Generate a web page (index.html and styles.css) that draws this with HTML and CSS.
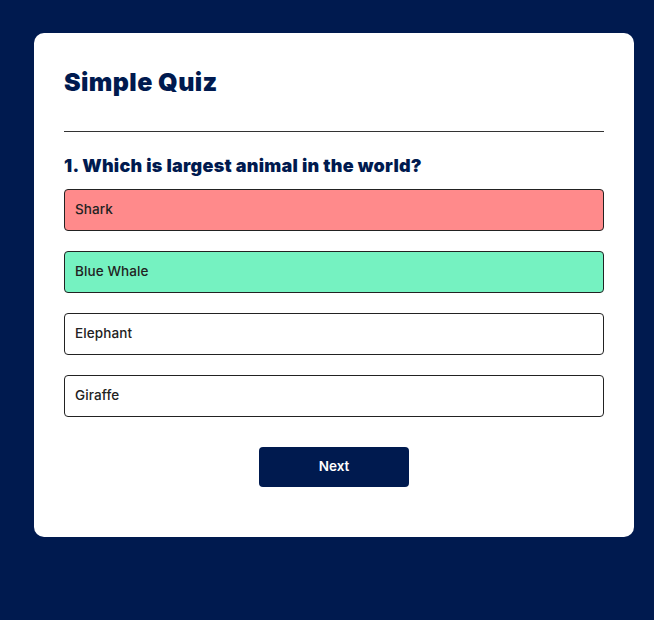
FILE: index.html
```html
<!DOCTYPE html>
<html lang="en">
<head>
<meta charset="utf-8">
<title>Simple Quiz</title>
<link rel="stylesheet" href="styles.css">
</head>
<body>
<div class="app">
  <h1 class="title">Simple Quiz</h1>
  <div class="quiz">
    <h2 class="question">1. Which is largest animal in the world?</h2>
    <div class="answers">
      <button class="btn incorrect">Shark</button>
      <button class="btn correct">Blue Whale</button>
      <button class="btn">Elephant</button>
      <button class="btn">Giraffe</button>
    </div>
    <button class="next">Next</button>
  </div>
</div>
</body>
</html>
```
FILE: styles.css
```css
* { box-sizing: border-box; }
html, body { margin: 0; padding: 0; }
body {
  background: #001a4f;
  font-family: Inter, "Noto Sans", sans-serif;
  width: 654px;
  height: 620px;
  overflow: hidden;
}
.app {
  background: #fff;
  width: 600px;
  margin: 33px 0 0 34px;
  border-radius: 10px;
  padding: 30px 30px 50px;
}
.title {
  margin: 0;
  font-size: 25px;
  line-height: 37px;
  font-weight: 900;
  color: #001a4f;
  padding-top: 1px;
  padding-bottom: 30px;
  border-bottom: 1px solid #333;
  letter-spacing: 0.4px;
}
.question {
  margin: 20px 0 10px;
  font-size: 18px;
  line-height: 27px;
  font-weight: 900;
  color: #001a4f;
  letter-spacing: 0.25px;
}
.answers {
  display: flex;
  flex-direction: column;
  gap: 20px;
}
.btn {
  display: block;
  width: 100%;
  height: 42px;
  background: #fff;
  color: #222;
  font-family: inherit;
  font-size: 13.5px;
  font-weight: 500;
  border: 1px solid #222;
  border-radius: 4px;
  padding: 0 10px 3px;
  text-align: left;
  letter-spacing: 0.1px;
}
.btn.incorrect { background: #ff8a8b; }
.btn.correct { background: #75f2c1; }
.next {
  display: block;
  width: 150px;
  height: 40px;
  margin: 30px auto 0;
  background: #001a4f;
  color: #fff;
  border: 0;
  border-radius: 4px;
  font-family: inherit;
  font-size: 13.5px;
  font-weight: 600;
  padding-bottom: 3px;
}
```
